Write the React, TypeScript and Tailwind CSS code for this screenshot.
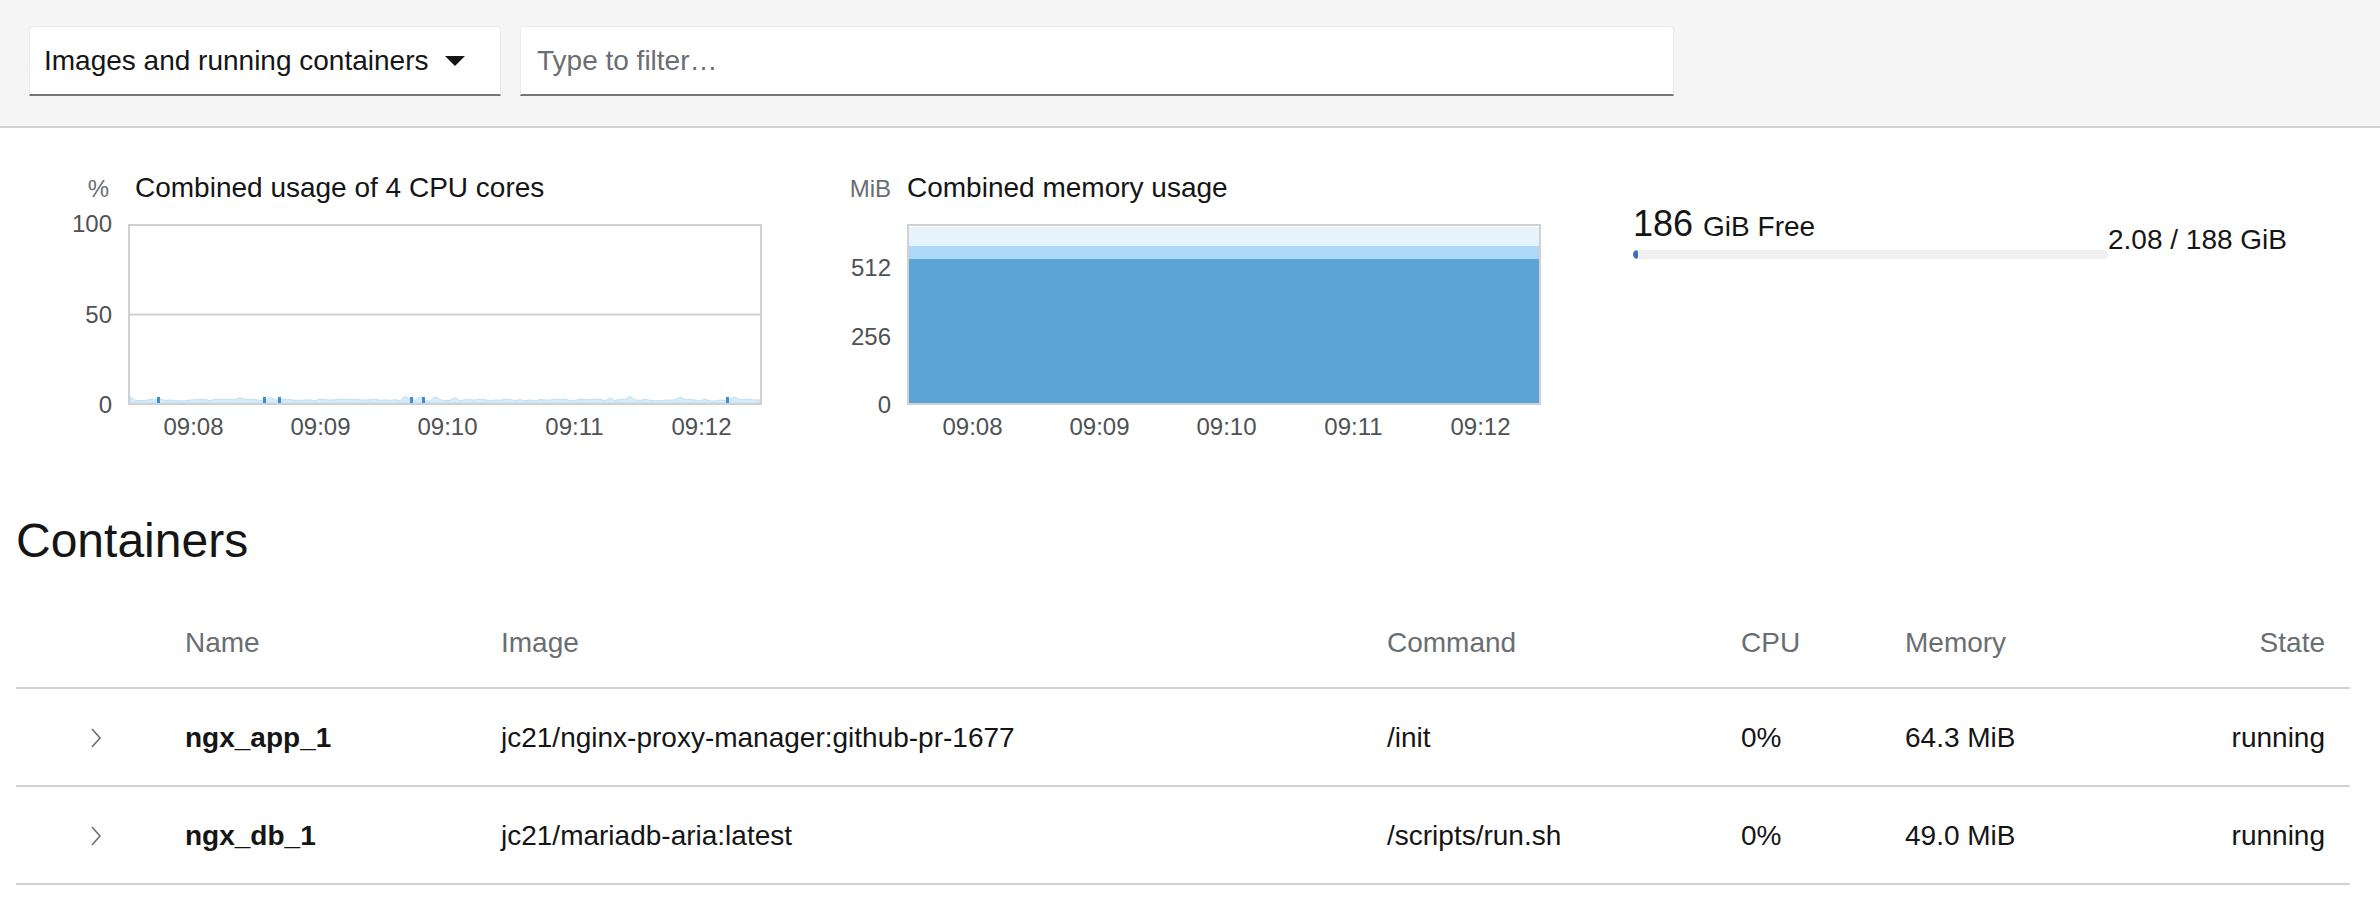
import type { ReactNode } from "react";

const ticks = ["09:08", "09:09", "09:10", "09:11", "09:12"];

const containers = [
  {
    name: "ngx_app_1",
    image: "jc21/nginx-proxy-manager:github-pr-1677",
    command: "/init",
    cpu: "0%",
    memory: "64.3 MiB",
    state: "running",
  },
  {
    name: "ngx_db_1",
    image: "jc21/mariadb-aria:latest",
    command: "/scripts/run.sh",
    cpu: "0%",
    memory: "49.0 MiB",
    state: "running",
  },
];

// deterministic little wobble along the bottom of the cpu graph
function cpuNoise() {
  let s = 11;
  const rnd = () => {
    s = (s * 9301 + 49297) % 233280;
    return s / 233280;
  };
  const pts: string[] = ["0,177"];
  for (let x = 0; x <= 630; x += 5) {
    const h = 2 + rnd() * 2 + (rnd() > 0.88 ? 3 : 0);
    pts.push(`${x},${(177 - h).toFixed(1)}`);
  }
  pts.push("630,177");
  return pts.join(" ");
}

const spikes = [27, 133, 148, 280, 292, 596];

function Toolbar() {
  return (
    <div className="flex h-[128px] items-start gap-[19px] border-b-2 border-[#d2d2d2] bg-[#f5f5f5] pl-[29px] pt-[26px]">
      <div className="flex h-[70px] w-[472px] items-center justify-between rounded-t-[4px] border border-b-2 border-[#ebebeb] border-b-[#72767b] bg-white pl-[14px] pr-[35px] text-[28px] text-[#151515]">
        <span>Images and running containers</span>
        <svg width="20" height="10" viewBox="0 0 20 10">
          <polygon points="0,0 20,0 10,10" fill="#151515" />
        </svg>
      </div>
      <div className="flex h-[70px] w-[1154px] items-center rounded-t-[4px] border border-b-2 border-[#ebebeb] border-b-[#72767b] bg-white pl-[16px] text-[28px] text-[#6a6e73]">
        Type to filter…
      </div>
    </div>
  );
}

type ChartProps = {
  unit: string;
  title: string;
  unitClass: string;
  titleClass: string;
  axis: ReactNode;
  children: ReactNode;
};

function Chart({ unit, title, unitClass, titleClass, axis, children }: ChartProps) {
  return (
    <div className="flex flex-col">
      <div className="flex items-baseline">
        <span className={unitClass}>{unit}</span>
        <span className={titleClass}>{title}</span>
      </div>
      <div className="mt-[17px] flex h-[181px]">
        <div className="h-[181px] w-[52px]">{axis}</div>
        <div className="ml-[16px] h-[181px] w-[634px] border-2 border-[#d1d1d1] bg-white">{children}</div>
      </div>
      <div className="ml-[68px] mt-[8px] flex pl-[2px] text-[24px] leading-[28px] text-[#4f5255]">
        {ticks.map((t) => (
          <div key={t} className="w-[127px] text-center">
            {t}
          </div>
        ))}
      </div>
    </div>
  );
}

function FreeMemory() {
  return (
    <div className="ml-[89px] mt-[34px] flex items-end">
      <div className="w-[475px]">
        <div className="flex items-baseline gap-[10px] leading-[40px] text-[#151515]">
          <span className="text-[36px]">186</span>
          <span className="text-[28px]">GiB Free</span>
        </div>
        <div className="mt-[3px] h-[9px] overflow-hidden rounded-full bg-[#f0f0f0]">
          <div className="h-full w-[1.1%] rounded-full bg-[#3e6fbf]" />
        </div>
      </div>
      <div className="mb-[5px] text-[28px] leading-[28px] text-[#151515]">2.08 / 188 GiB</div>
    </div>
  );
}

function Chevron() {
  return (
    <svg width="12" height="20" viewBox="0 0 12 20" fill="none">
      <polyline points="2,1 10,10 2,19" stroke="#6a6e73" strokeWidth="1.6" />
    </svg>
  );
}

const gridCols = "grid grid-cols-[169px_316px_886px_354px_164px_1fr_200px]";

function ContainerTable() {
  return (
    <div className="text-[28px] leading-[28px]">
      <div className={`${gridCols} border-b-2 border-[#d2d2d2] pb-[30px] pt-[32px] text-[#6a6e73]`}>
        <div />
        <div>Name</div>
        <div>Image</div>
        <div>Command</div>
        <div>CPU</div>
        <div>Memory</div>
        <div className="pr-[25px] text-right">State</div>
      </div>
      {containers.map((c) => (
        <div
          key={c.name}
          className={`${gridCols} items-center border-b-2 border-[#d2d2d2] pb-[33px] pt-[35px] text-[#151515]`}
        >
          <div className="flex pl-[74px]">
            <Chevron />
          </div>
          <div className="font-bold">{c.name}</div>
          <div>{c.image}</div>
          <div>{c.command}</div>
          <div>{c.cpu}</div>
          <div>{c.memory}</div>
          <div className="pr-[25px] text-right">{c.state}</div>
        </div>
      ))}
    </div>
  );
}

export default function App() {
  return (
    <div className="min-h-screen w-full bg-white font-['Liberation_Sans',Arial,sans-serif] text-[#151515]">
      <Toolbar />

      <div className="flex items-start pl-[60px] pt-[42px]">
        <Chart
          unit="%"
          title="Combined usage of 4 CPU cores"
          unitClass="w-[52px] pr-[3px] text-right text-[24px] leading-[36px] text-[#6a6e73]"
          titleClass="ml-[23px] text-[28px] leading-[36px] text-[#151515]"
          axis={
            <div className="-mt-[14px] flex h-[209px] flex-col justify-between text-right text-[24px] leading-[28px] text-[#4f5255]">
              <span>100</span>
              <span>50</span>
              <span>0</span>
            </div>
          }
        >
          <svg className="h-full w-full" viewBox="0 0 630 177" preserveAspectRatio="none">
            <line x1="0" y1="88.5" x2="630" y2="88.5" stroke="#d1d1d1" strokeWidth="2" />
            <polygon points={cpuNoise()} fill="#d6ecfb" stroke="#bfe0f7" strokeWidth="1" />
            {spikes.map((x) => (
              <rect key={x} x={x} y="171" width="3" height="6" fill="#3d8fd4" />
            ))}
          </svg>
        </Chart>

        <div className="ml-[74px]">
          <Chart
            unit="MiB"
            title="Combined memory usage"
            unitClass="w-[52px] text-right text-[24px] leading-[36px] text-[#6a6e73]"
            titleClass="ml-[16px] text-[28px] leading-[36px] text-[#151515]"
            axis={
              <div className="mt-[30px] flex h-[165px] flex-col justify-between text-right text-[24px] leading-[28px] text-[#4f5255]">
                <span>512</span>
                <span>256</span>
                <span>0</span>
              </div>
            }
          >
            <svg className="h-full w-full" viewBox="0 0 630 177" preserveAspectRatio="none">
              <rect x="0" y="1" width="630" height="176" fill="#e6f2fc" />
              <rect x="0" y="20" width="630" height="157" fill="#aed8f7" />
              <rect x="0" y="33" width="630" height="144" fill="#5aa4d6" />
            </svg>
          </Chart>
        </div>

        <FreeMemory />
      </div>

      <section className="pl-[16px] pr-[30px]">
        <h2 className="mb-[28px] mt-[72px] text-[48px] leading-[56px] text-[#151515]">Containers</h2>
        <ContainerTable />
      </section>
    </div>
  );
}
